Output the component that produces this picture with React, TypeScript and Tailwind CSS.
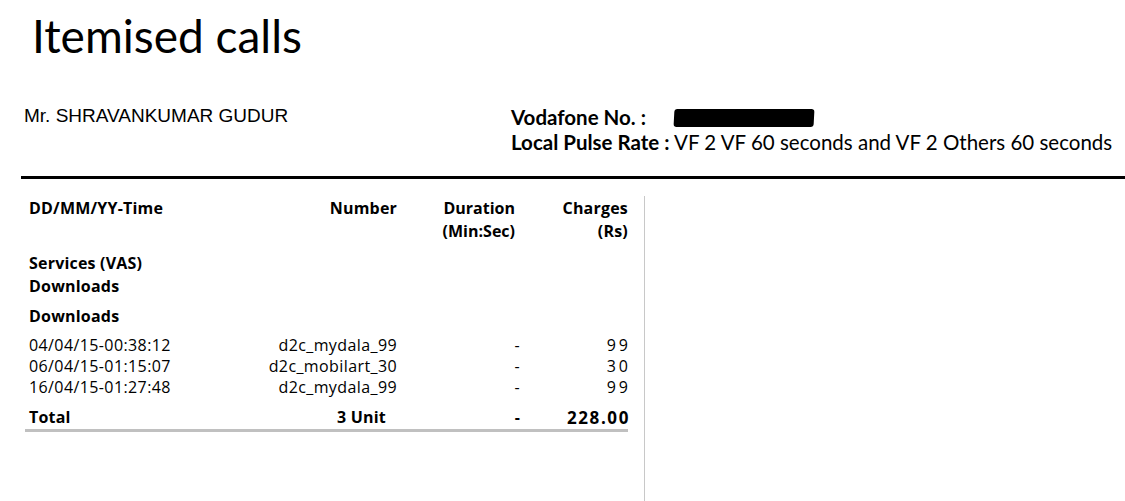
const rows = [
  { date: "04/04/15-00:38:12", number: "d2c_mydala_99", charge: "99" },
  { date: "06/04/15-01:15:07", number: "d2c_mobilart_30", charge: "30" },
  { date: "16/04/15-01:27:48", number: "d2c_mydala_99", charge: "99" },
];

const cols = "grid grid-cols-[200px_168px_118px_113px]";

export default function App() {
  return (
    <div className="w-[1125px] h-[501px] bg-white text-black overflow-hidden font-['Lato',sans-serif]">
      <h1 className="pl-[32px] pt-[9px] text-[46px] leading-[54px] font-normal">Itemised calls</h1>

      <div className="flex mt-[42px] h-[71px]">
        <div className="w-[511px] pl-[24px] font-['Liberation_Sans',sans-serif] text-[19px] leading-[22px]">
          Mr. SHRAVANKUMAR GUDUR
        </div>
        <div className="text-[20.5px] leading-[25px]">
          <div className="flex items-center">
            <span className="font-bold">Vodafone No. :</span>
            <span className="ml-[28px] inline-block w-[140px] h-[18px] bg-black rounded-[3px] -skew-x-3"></span>
          </div>
          <div>
            <span className="font-bold">Local Pulse Rate :</span> VF 2 VF 60 seconds and VF 2 Others 60 seconds
          </div>
        </div>
      </div>

      <div className="ml-[21px] h-[3px] bg-black"></div>

      <div className="ml-[21px] mt-[17px] w-[624px] h-[307px] border-r border-[#c8c8c8] pl-[8px] text-[16px] font-['Open_Sans',sans-serif]">
        <div className={`${cols} font-bold tracking-[0.2px] leading-[23px] pt-[1px]`}>
          <div>DD/MM/YY-Time</div>
          <div className="text-right">Number</div>
          <div className="text-right tracking-normal">Duration<br />(Min:Sec)</div>
          <div className="text-right">Charges<br />(Rs)</div>
        </div>

        <div className="font-bold tracking-[0.2px] leading-[23px] mt-[9px]">
          <div>Services (VAS)</div>
          <div>Downloads</div>
        </div>
        <div className="font-bold tracking-[0.2px] leading-[23px] mt-[7px]">Downloads</div>

        <div className="mt-[7px] leading-[21px] tracking-[0.4px]">
          {rows.map((r, i) => (
            <div key={i} className={cols}>
              <div>{r.date}</div>
              <div className="text-right">{r.number}</div>
              <div className="text-right -mr-[5px]">-</div>
              <div className="text-right tracking-[3px] -mr-[3px]">{r.charge}</div>
            </div>
          ))}
        </div>

        <div className={`${cols} font-bold tracking-[0.2px] leading-[23px] mt-[8px]`}>
          <div>Total</div>
          <div className="text-right pr-[11px]">3 Unit</div>
          <div className="text-right -mr-[5px]">-</div>
          <div className="text-right text-[17px] tracking-[1.6px] -mr-[2px]">228.00</div>
        </div>
        <div className="-ml-[4px] w-[603px] h-[3px] bg-[#c0c0c0]"></div>
      </div>
    </div>
  );
}
